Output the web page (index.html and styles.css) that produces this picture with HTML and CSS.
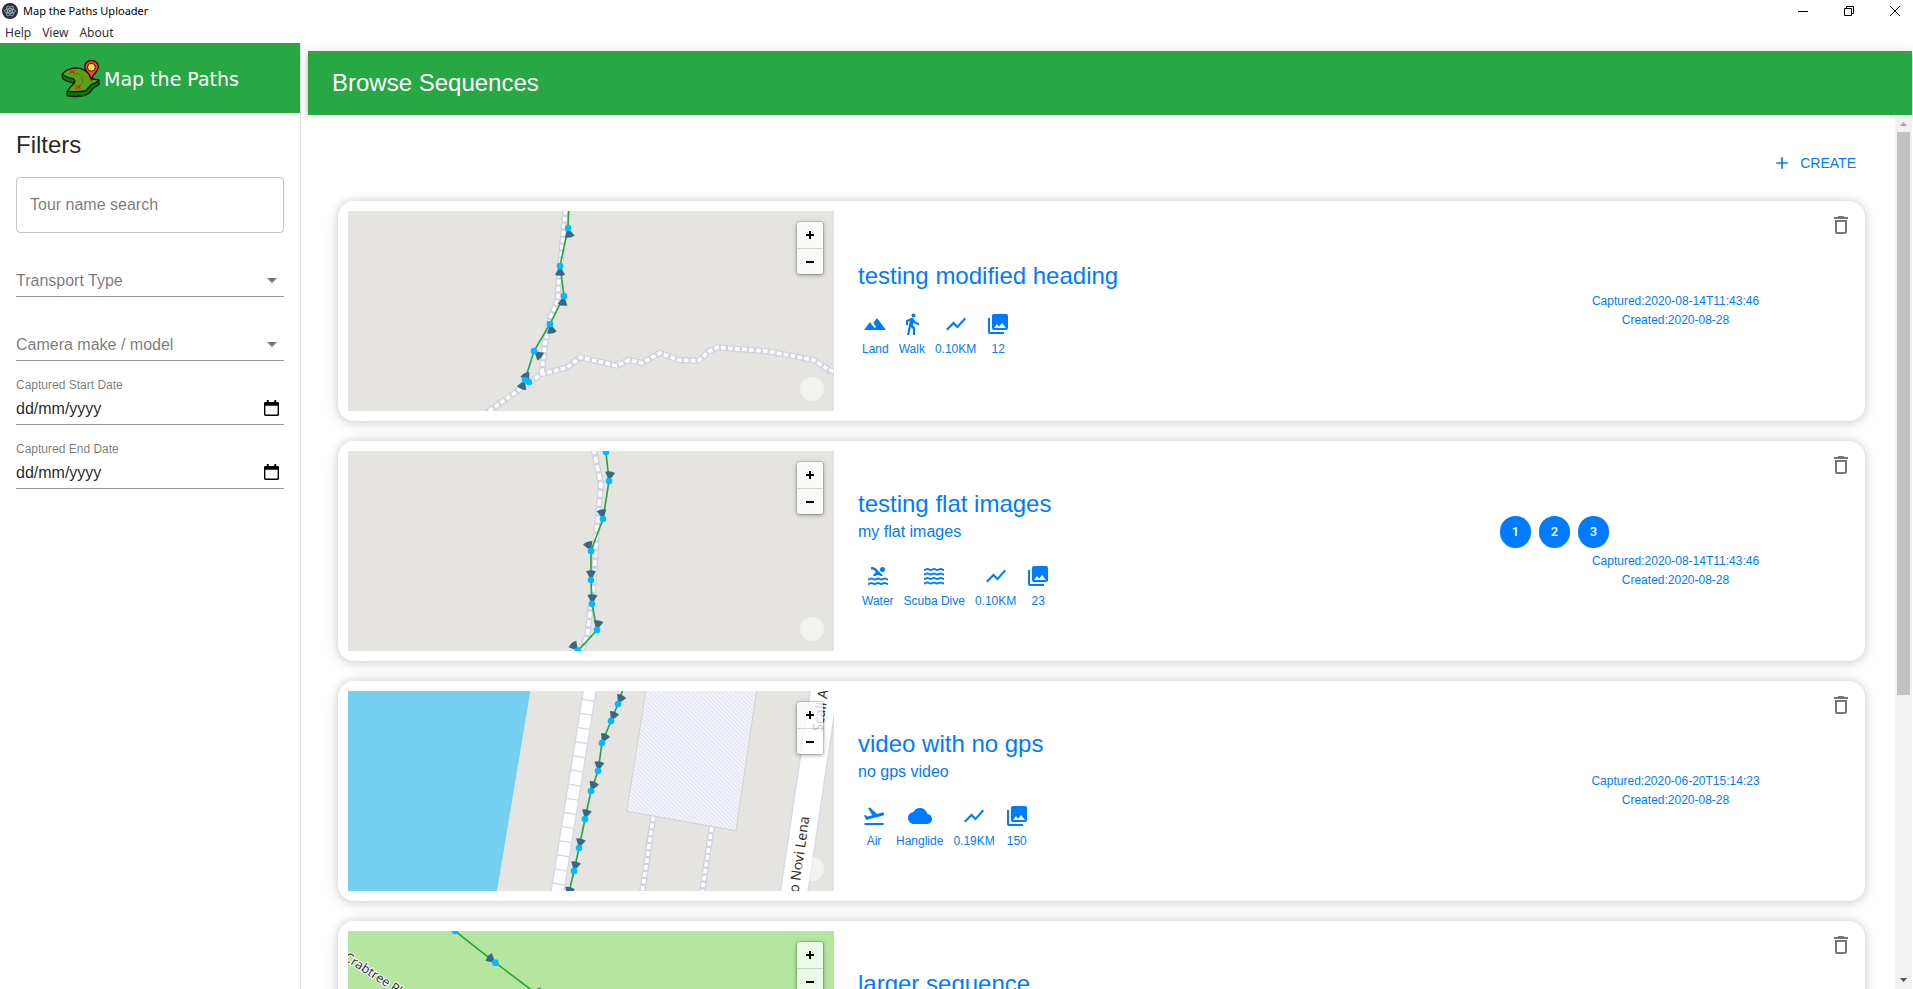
FILE: index.html
```html
<!DOCTYPE html>
<html lang="en-GB">
<head>
<meta charset="utf-8">
<title>Map the Paths Uploader</title>
<link rel="stylesheet" href="styles.css">
</head>
<body>
<svg class="defs" aria-hidden="true">
  <defs>
    <symbol id="i-trash" viewBox="0 0 24 24"><path d="M6 19c0 1.100.9 2 2 2h8c1.100 0 2-.9 2-2V7H6v12zM8 9h8v10H8V9zm7.500-5l-1-1h-5l-1 1H5v2h14V4h-3.500z"/></symbol>
    <symbol id="i-add" viewBox="0 0 24 24"><path d="M19 13h-6v6h-2v-6H5v-2h6V5h2v6h6v2z"/></symbol>
    <symbol id="i-land" viewBox="0 0 24 24"><path d="M14 6l-3.750 5 2.850 3.800-1.600 1.200C9.810 13.750 7 10 7 10l-6 8h22L14 6z"/></symbol>
    <symbol id="i-walk" viewBox="0 0 24 24"><path d="M13.500 5.500c1.100 0 2-.9 2-2s-.9-2-2-2-2 .9-2 2 .9 2 2 2zM9.800 8.900L7 23h2.100l1.800-8 2.100 2v6h2v-7.500l-2.100-2 .6-3C14.800 12 16.800 13 19 13v-2c-1.900 0-3.500-1-4.300-2.400l-1-1.600c-.4-.6-1-1-1.700-1-.3 0-.5.1-.8.1L6 8.300V13h2V9.600l1.800-.7"/></symbol>
    <symbol id="i-chart" viewBox="0 0 24 24"><path d="M3.500 18.490l6-6.010 4 4L22 6.920l-1.410-1.410-7.090 7.970-4-4L2 16.990z"/></symbol>
    <symbol id="i-photos" viewBox="0 0 24 24"><path d="M22 16V4c0-1.100-.9-2-2-2H8c-1.100 0-2 .9-2 2v12c0 1.100.9 2 2 2h12c1.100 0 2-.9 2-2zm-11-4l2.030 2.710L16 11l4 5H8l3-4zM2 6v14c0 1.100.9 2 2 2h14v-2H4V6H2z"/></symbol>
    <symbol id="i-pool" viewBox="0 0 24 24">
      <path d="M8.670 12c.56 0 .78-.13 1.150-.36.46-.27 1.080-.64 2.190-.64 1.110 0 1.730.37 2.180.64.37.22.6.36 1.150.36s.78-.13 1.150-.36c.12-.07.26-.15.41-.23L10.480 5C8.930 3.450 7.500 2.990 5 3v2.500c1.820-.01 2.890.39 4 1.500l1 1-3.250 3.250c.31.12.56.27.77.39.37.23.59.36 1.150.36z"/>
      <circle cx="16.500" cy="5.500" r="2.500"/>
      <g fill="none" stroke="currentColor" stroke-width="2">
        <path d="M2 15.500c1.700 0 1.700-1 3.330-1s1.700 1 3.340 1 1.700-1 3.330-1 1.700 1 3.330 1 1.700-1 3.340-1 1.700 1 3.330 1"/>
        <path d="M2 20c1.700 0 1.700-1 3.330-1s1.700 1 3.340 1 1.700-1 3.330-1 1.700 1 3.330 1 1.700-1 3.340-1 1.700 1 3.330 1"/>
      </g>
    </symbol>
    <symbol id="i-waves" viewBox="0 0 24 24">
      <g fill="none" stroke="currentColor" stroke-width="2">
        <path d="M2 6c1.700 0 1.700-1 3.330-1s1.700 1 3.340 1 1.700-1 3.330-1 1.700 1 3.330 1 1.700-1 3.340-1 1.700 1 3.330 1"/>
        <path d="M2 10.500c1.700 0 1.700-1 3.330-1s1.700 1 3.340 1 1.700-1 3.330-1 1.700 1 3.330 1 1.700-1 3.340-1 1.700 1 3.330 1"/>
        <path d="M2 15c1.700 0 1.700-1 3.330-1s1.700 1 3.340 1 1.700-1 3.330-1 1.700 1 3.330 1 1.700-1 3.340-1 1.700 1 3.330 1"/>
        <path d="M2 19.500c1.700 0 1.700-1 3.330-1s1.700 1 3.340 1 1.700-1 3.330-1 1.700 1 3.330 1 1.700-1 3.340-1 1.700 1 3.330 1"/>
      </g>
    </symbol>
    <symbol id="i-air" viewBox="0 0 24 24"><path d="M2.500 19h19v2h-19zm19.570-9.360c-.21-.8-1.040-1.280-1.840-1.060L14.920 10l-6.900-6.430-1.930.51 4.140 7.170-4.970 1.330-1.970-1.540-1.450.39 1.820 3.160.77 1.330 1.600-.43 5.310-1.420 4.350-1.160L21 11.490c.81-.23 1.280-1.050 1.070-1.850z"/></symbol>
    <symbol id="i-cloud" viewBox="0 0 24 24"><path d="M19.350 10.040C18.670 6.590 15.640 4 12 4 9.110 4 6.600 5.640 5.350 8.040 2.340 8.360 0 10.910 0 14c0 3.310 2.690 6 6 6h13c2.760 0 5-2.240 5-5 0-2.640-2.050-4.780-4.650-4.960z"/></symbol>
    <symbol id="i-calendar" viewBox="0 0 16 18"><path fill-rule="evenodd" d="M1.500 2H3V0h2v2h6V0h2v2h1.500Q16 2 16 3.500v12Q16 17 14.500 17h-13Q0 17 0 15.500v-12Q0 2 1.500 2zM1.500 6v9.500h13V6z"/></symbol>
    <path id="cone" class="cone" d="M0 0L-15-26Q0-33 15-26z"/>
    <pattern id="hatch" width="9" height="9" patternUnits="userSpaceOnUse" patternTransform="rotate(-45)"><rect width="9" height="9" fill="#f7f7fb"/><rect width="4" height="9" fill="#dfe2f0"/></pattern>
  </defs>
</svg>

<div class="window">
  <header class="titlebar">
    <div class="title-row">
      <svg class="app-icon" viewBox="0 0 16 16" aria-hidden="true">
        <circle cx="8" cy="8" r="8" fill="#2b2e3b"/>
        <g fill="none" stroke="#9fc5d0" stroke-width=".8"><ellipse cx="8" cy="8" rx="5.500" ry="2.200"/><ellipse cx="8" cy="8" rx="5.500" ry="2.200" transform="rotate(60 8 8)"/><ellipse cx="8" cy="8" rx="5.500" ry="2.200" transform="rotate(120 8 8)"/></g>
        <circle cx="8" cy="8" r="1" fill="#9fc5d0"/>
      </svg>
      <span class="app-title">Map the Paths Uploader</span>
      <div class="window-buttons">
        <button type="button" aria-label="Minimize"><svg viewBox="0 0 10 10"><path d="M0 5.500h10"/></svg></button>
        <button type="button" aria-label="Restore"><svg viewBox="0 0 10 10"><path d="M.5 2.500h7v7h-7zM2.500 2.500v-2h7v7h-2"/></svg></button>
        <button type="button" aria-label="Close"><svg viewBox="0 0 10 10"><path d="M0 0l10 10M10 0L0 10"/></svg></button>
      </div>
    </div>
    <nav class="menu">
      <button type="button">Help</button>
      <button type="button">View</button>
      <button type="button">About</button>
    </nav>
  </header>

  <div class="app">
    <aside class="sidebar">
      <div class="brand">
        <svg class="brand-icon" viewBox="175 175 118 118" aria-hidden="true">
          <g stroke="#0a1a08" stroke-width="4" stroke-linejoin="round">
            <path fill="#067a0b" d="M179 220L179 232Q190 245 215 247Q213 258 194 273L194 286Q215 291 245 286Q262 280 268 268Q275 261 290 252L289 238Z"/>
            <path fill="#5ca016" d="M179 220Q195 203 222 202Q242 203 258 218L268 236L289 238Q286 247 268 252Q258 260 250 271Q225 276 194 273Q203 258 216 247Q220 236 206 233Q188 230 179 220Z"/>
          </g>
          <path fill="none" stroke="#a52b15" stroke-width="3" stroke-dasharray="4 4" d="M222 218Q244 226 241 242Q239 252 228 257"/>
          <path stroke="#e02020" stroke-width="4" d="M201 209l16 10M217 209l-16 10M219 255l16 10M235 255l-16 10"/>
          <path fill="#f4433a" stroke="#201008" stroke-width="4" d="M267 237Q262 222 252 212Q246 204 247 196Q250 180 267 179Q285 180 288 196Q288 205 282 213Q272 223 267 237Z"/>
          <circle cx="267" cy="200" r="12" fill="#ffe135" stroke="#201008" stroke-width="3"/>
        </svg>
        <span>Map the Paths</span>
      </div>
      <form class="filters">
        <h2>Filters</h2>
        <input class="search" type="text" aria-label="Tour name search" placeholder="Tour name search">
        <div class="selects">
          <select aria-label="Transport Type"><option>Transport Type</option></select>
          <select aria-label="Camera make / model"><option>Camera make / model</option></select>
        </div>
        <div class="field">
          <label for="start">Captured Start Date</label>
          <div class="date"><input id="start" type="text" placeholder="dd/mm/yyyy"><button type="button" aria-label="Pick start date"><svg><use href="#i-calendar"/></svg></button></div>
        </div>
        <div class="field">
          <label for="end">Captured End Date</label>
          <div class="date"><input id="end" type="text" placeholder="dd/mm/yyyy"><button type="button" aria-label="Pick end date"><svg><use href="#i-calendar"/></svg></button></div>
        </div>
      </form>
    </aside>

    <main class="main">
      <div class="page-head"><h1>Browse Sequences</h1></div>
      <div class="scroll">
        <div class="content">
          <button class="create" type="button"><svg><use href="#i-add"/></svg>CREATE</button>

          <article class="card">
            <div class="map">
              <svg class="map-art" viewBox="24 33 1458 600" preserveAspectRatio="xMidYMid slice">
                <path class="path-edge" d="M677 30L655 260L654 300L632 350L615 430L605 522"/>
                <path class="path-edge" d="M430 645L605 522L680 503L722 472L830 497L868 480L905 489L960 459L1015 480L1075 483L1105 455L1132 442L1285 454L1420 480L1467 510L1500 520"/>
                <path class="path-fill" d="M677 30L655 260L654 300L632 350L615 430L605 522"/>
                <path class="path-fill" d="M430 645L605 522L680 503L722 472L830 497L868 480L905 489L960 459L1015 480L1075 483L1105 455L1132 442L1285 454L1420 480L1467 510L1500 520"/>
                <path class="track" d="M686 30L684 84L660 198L672 288L630 372L582 453L555 540L567 546"/>
                <use href="#cone" transform="translate(684 84) rotate(168)"/>
                <use href="#cone" transform="translate(660 198) rotate(180)"/>
                <use href="#cone" transform="translate(672 288) rotate(190)"/>
                <use href="#cone" transform="translate(630 372) rotate(167)"/>
                <use href="#cone" transform="translate(582 453) rotate(130)"/>
                <use href="#cone" transform="translate(567 546) rotate(-28)"/>
                <use href="#cone" transform="translate(555 540) rotate(203)"/>
                <g class="dots"><circle cx="684" cy="84" r="10"/><circle cx="660" cy="198" r="10"/><circle cx="672" cy="288" r="10"/><circle cx="630" cy="372" r="10"/><circle cx="582" cy="453" r="10"/><circle cx="555" cy="540" r="10"/><circle cx="567" cy="546" r="10"/></g>
              </svg>
              <div class="zoom"><button type="button" aria-label="Zoom in"><svg viewBox="0 0 8 8"><path d="M0 4h8M4 0v8"/></svg></button><button type="button" aria-label="Zoom out"><svg viewBox="0 0 8 8"><path d="M0 4h8"/></svg></button></div>
              <button class="info" type="button" aria-label="Map information"></button>
            </div>
            <div class="detail">
              <h3>testing modified heading</h3>
              <ul class="stats">
                <li><svg><use href="#i-land"/></svg>Land</li>
                <li><svg><use href="#i-walk"/></svg>Walk</li>
                <li><svg><use href="#i-chart"/></svg>0.10KM</li>
                <li><svg><use href="#i-photos"/></svg>12</li>
              </ul>
            </div>
            <div class="meta"><p>Captured:2020-08-14T11:43:46</p><p>Created:2020-08-28</p></div>
            <button class="delete" type="button" aria-label="Delete sequence"><svg><use href="#i-trash"/></svg></button>
          </article>

          <article class="card">
            <div class="map">
              <svg class="map-art" viewBox="24 33 1458 600" preserveAspectRatio="xMidYMid slice">
                <path class="path-edge" d="M760 25L783 132L770 270L762 420L742 585L722 640"/>
                <path class="path-fill long" d="M760 25L783 132L770 270L762 420L742 585L722 640"/>
                <path class="track" d="M798 36L807 123L789 237L753 333L753 420L756 492L771 570L714 632"/>
                <use href="#cone" transform="translate(807 123) rotate(8)"/>
                <use href="#cone" transform="translate(789 237) rotate(-10)"/>
                <use href="#cone" transform="translate(753 333) rotate(-22)"/>
                <use href="#cone" transform="translate(753 420)"/>
                <use href="#cone" transform="translate(756 492) rotate(3)"/>
                <use href="#cone" transform="translate(771 570) rotate(10)"/>
                <use href="#cone" transform="translate(714 632) rotate(-40)"/>
                <g class="dots"><circle cx="798" cy="36" r="10"/><circle cx="807" cy="123" r="10"/><circle cx="789" cy="237" r="10"/><circle cx="753" cy="333" r="10"/><circle cx="753" cy="420" r="10"/><circle cx="756" cy="492" r="10"/><circle cx="771" cy="570" r="10"/><circle cx="714" cy="632" r="10"/></g>
              </svg>
              <div class="zoom"><button type="button" aria-label="Zoom in"><svg viewBox="0 0 8 8"><path d="M0 4h8M4 0v8"/></svg></button><button type="button" aria-label="Zoom out"><svg viewBox="0 0 8 8"><path d="M0 4h8"/></svg></button></div>
              <button class="info" type="button" aria-label="Map information"></button>
            </div>
            <div class="detail">
              <h3>testing flat images</h3>
              <p>my flat images</p>
              <ul class="stats">
                <li><svg><use href="#i-pool"/></svg>Water</li>
                <li><svg><use href="#i-waves"/></svg>Scuba Dive</li>
                <li><svg><use href="#i-chart"/></svg>0.10KM</li>
                <li><svg><use href="#i-photos"/></svg>23</li>
              </ul>
            </div>
            <div class="meta">
              <div class="chips"><span>1</span><span>2</span><span>3</span></div>
              <p>Captured:2020-08-14T11:43:46</p><p>Created:2020-08-28</p>
            </div>
            <button class="delete" type="button" aria-label="Delete sequence"><svg><use href="#i-trash"/></svg></button>
          </article>

          <article class="card">
            <div class="map">
              <svg class="map-art" viewBox="24 33 1458 600" preserveAspectRatio="xMidYMid slice">
                <path fill="#75cff0" d="M0 33H571L471 633H0z"/>
                <path class="promenade-edge" d="M751 20L651 645"/>
                <path class="promenade" d="M751 20L651 645"/>
                <path fill="url(#hatch)" stroke="#d3d1ce" stroke-width="3" d="M918 30H1250L1188 452L860 394z"/>
                <path class="path-edge" d="M940 408L905 645M1115 440L1085 645"/>
                <path class="path-fill" d="M940 410L905 645M1115 442L1085 645"/>
                <path class="road-edge" d="M1454 20L1361 645"/>
                <path class="road" d="M1454 20L1361 645"/>
                <text class="street" text-anchor="end" transform="translate(1408 411) rotate(-82)">o Novi Lena</text>
                <text class="street" transform="translate(1447 156) rotate(-82)">Scali A</text>
                <path class="track" d="M848 30L834 72L813 123L786 189L774 273L753 333L735 417L717 504L702 573L684 650"/>
                <use href="#cone" transform="translate(834 72) rotate(25)"/>
                <use href="#cone" transform="translate(813 123) rotate(24)"/>
                <use href="#cone" transform="translate(786 189) rotate(24)"/>
                <use href="#cone" transform="translate(774 273) rotate(9)"/>
                <use href="#cone" transform="translate(753 333) rotate(22)"/>
                <use href="#cone" transform="translate(735 417) rotate(13)"/>
                <use href="#cone" transform="translate(717 504) rotate(13)"/>
                <use href="#cone" transform="translate(702 573) rotate(14)"/>
                <use href="#cone" transform="translate(684 650) rotate(14)"/>
                <g class="dots"><circle cx="834" cy="72" r="10"/><circle cx="813" cy="123" r="10"/><circle cx="786" cy="189" r="10"/><circle cx="774" cy="273" r="10"/><circle cx="753" cy="333" r="10"/><circle cx="735" cy="417" r="10"/><circle cx="717" cy="504" r="10"/><circle cx="702" cy="573" r="10"/></g>
              </svg>
              <div class="zoom"><button type="button" aria-label="Zoom in"><svg viewBox="0 0 8 8"><path d="M0 4h8M4 0v8"/></svg></button><button type="button" aria-label="Zoom out"><svg viewBox="0 0 8 8"><path d="M0 4h8"/></svg></button></div>
              <button class="info" type="button" aria-label="Map information"></button>
            </div>
            <div class="detail">
              <h3>video with no gps</h3>
              <p>no gps video</p>
              <ul class="stats">
                <li><svg><use href="#i-air"/></svg>Air</li>
                <li><svg><use href="#i-cloud"/></svg>Hanglide</li>
                <li><svg><use href="#i-chart"/></svg>0.19KM</li>
                <li><svg><use href="#i-photos"/></svg>150</li>
              </ul>
            </div>
            <div class="meta"><p>Captured:2020-06-20T15:14:23</p><p>Created:2020-08-28</p></div>
            <button class="delete" type="button" aria-label="Delete sequence"><svg><use href="#i-trash"/></svg></button>
          </article>

          <article class="card">
            <div class="map park">
              <svg class="map-art" viewBox="24 33 1458 600" preserveAspectRatio="xMidYMid slice">
                <text class="street halo" transform="translate(10 118) rotate(33)">Crabtree Pl</text>
                <path class="track" d="M345 33L466 128L570 207L700 310"/>
                <use href="#cone" transform="translate(466 128) rotate(-50)"/>
                <use href="#cone" transform="translate(610 230) rotate(-50)"/>
                <g class="dots"><circle cx="345" cy="33" r="10"/><circle cx="466" cy="128" r="10"/></g>
              </svg>
              <div class="zoom"><button type="button" aria-label="Zoom in"><svg viewBox="0 0 8 8"><path d="M0 4h8M4 0v8"/></svg></button><button type="button" aria-label="Zoom out"><svg viewBox="0 0 8 8"><path d="M0 4h8"/></svg></button></div>
            </div>
            <div class="detail top">
              <h3>larger sequence</h3>
            </div>
            <button class="delete" type="button" aria-label="Delete sequence"><svg><use href="#i-trash"/></svg></button>
          </article>
        </div>
        <div class="scrollbar" aria-hidden="true">
          <svg viewBox="0 0 17 17"><path fill="#a3a3a3" d="M5 11l3.500-4 3.500 4z"/></svg>
          <div class="rail"><div class="thumb"></div></div>
          <svg viewBox="0 0 17 17"><path fill="#505050" d="M5 6l3.500 4 3.500-4z"/></svg>
        </div>
      </div>
    </main>
  </div>
</div>
</body>
</html>
```
FILE: styles.css
```css
* { box-sizing: border-box; }
body { margin: 0; font-family: "Liberation Sans", Arial, sans-serif; color: rgba(0, 0, 0, .87); background: #fff; }
h1, h2, h3, p, ul { margin: 0; padding: 0; font-weight: 400; }
button, input, select { font: inherit; color: inherit; background: none; border: 0; padding: 0; margin: 0; border-radius: 0; }
svg { display: block; fill: currentColor; }
.defs { position: absolute; width: 0; height: 0; }

.window { height: 100vh; display: flex; flex-direction: column; overflow: hidden; }

/* native window frame */
.titlebar { font-family: "Noto Sans", "Open Sans", sans-serif; color: #000; }
.title-row { display: flex; align-items: center; height: 22px; padding-left: 2px; gap: 5px; }
.app-icon { width: 16px; height: 16px; }
.app-title { font-size: 11px; line-height: 16px; }
.window-buttons { display: flex; gap: 10px; margin-left: auto; }
.window-buttons button { width: 36px; height: 20px; display: grid; place-items: center; }
.window-buttons svg { width: 10px; height: 10px; fill: none; stroke: #000; stroke-width: 1; overflow: visible; }
.menu { display: flex; gap: 11px; height: 21px; padding: 3px 0 0 5px; }
.menu button { font-size: 12px; line-height: 16px; height: 16px; color: #333; }

.app { flex: 1; min-height: 0; display: flex; }

/* sidebar */
.sidebar { width: 301px; flex: none; border-right: 1px solid #e0e0e0; }
.brand { height: 70px; padding-top: 1px; background: #28a745; color: #fff; display: flex; align-items: center; justify-content: center; gap: 4px; font: 19px/24px "DejaVu Sans", sans-serif; }
.brand-icon { width: 39px; height: 39px; }
.filters { padding: 16px; display: flex; flex-direction: column; gap: 16px; }
.filters h2 { font-size: 24px; line-height: 32px; }
.search { width: 100%; height: 56px; padding: 0 13px; border: 1px solid rgba(0, 0, 0, .23); border-radius: 4px; font-size: 16px; }
.search::placeholder { color: rgba(0, 0, 0, .54); opacity: 1; }
.selects { padding-top: 16px; display: flex; flex-direction: column; gap: 32px; }
.selects select { appearance: none; width: 100%; height: 32px; font-size: 16px; color: rgba(0, 0, 0, .54); border-bottom: 1px solid rgba(0, 0, 0, .42);
  background: url("data:image/svg+xml,%3Csvg xmlns='http://www.w3.org/2000/svg' viewBox='0 0 10 5'%3E%3Cpath d='M0 0h10L5 5z' fill='%23757575'/%3E%3C/svg%3E") right 7px center / 10px 5px no-repeat; }
.field label { display: block; font-size: 12px; line-height: 16px; color: rgba(0, 0, 0, .54); }
.date { display: flex; align-items: center; height: 32px; padding-right: 5px; border-bottom: 1px solid rgba(0, 0, 0, .42); }
.date input { flex: 1; min-width: 0; font-size: 16px; height: 30px; }
.date input::placeholder { color: rgba(0, 0, 0, .87); opacity: 1; }
.date svg { width: 15px; height: 17px; fill: #000; }

/* main column */
.main { flex: 1; min-width: 0; padding: 8px 1px 0 7px; display: flex; flex-direction: column; }
.page-head { height: 64px; flex: none; padding: 0 24px; display: flex; align-items: center; background: #28a745; color: #fff;
  box-shadow: 0 2px 4px -1px rgba(0, 0, 0, .2), 0 4px 5px 0 rgba(0, 0, 0, .14), 0 1px 10px 0 rgba(0, 0, 0, .12); }
.page-head h1 { font-size: 24px; line-height: 32px; }
.scroll { position: relative; flex: 1; min-height: 0; display: flex; background: #fff; overflow: hidden; }
.content { flex: 1; min-width: 0; padding: 30px; display: flex; flex-direction: column; gap: 20px; }
.create { align-self: flex-end; flex: none; height: 36px; padding: 0 9px; display: flex; align-items: center; gap: 8px; font-size: 14px; line-height: 24px; color: #007bff; }
.create svg { width: 20px; height: 20px; }

.card { position: relative; flex: none; display: grid; grid-template-columns: 486fr 614fr 359fr; column-gap: 24px; align-items: center; padding: 10px; border-radius: 16px; background: #fff; color: #007bff;
  box-shadow: 0 0 8px rgba(33, 45, 70, .2), 0 4px 16px rgba(33, 45, 70, .1); }
.map { position: relative; height: 200px; background: #e5e4e0; overflow: hidden; }
.map.park { background: #b5e59e; }
.map-art { width: 100%; height: 100%; fill: none; }
.path-edge { stroke: #d1d2de; stroke-width: 19; stroke-linejoin: round; }
.path-fill { stroke: #fff; stroke-width: 11; stroke-dasharray: 14 7; }
.path-fill.long { stroke-dasharray: 18 8; }
.promenade-edge { stroke: #d5d8e6; stroke-width: 42; }
.promenade { stroke: #fff; stroke-width: 34; stroke-dasharray: 39 4; }
.road-edge { stroke: #d5d8e6; stroke-width: 86; }
.road { stroke: #fff; stroke-width: 78; }
.track { stroke: #28a745; stroke-width: 5; }
.cone { fill: #35698a; }
.dots { fill: #00bcff; }
.street { font: 42px "Noto Sans", sans-serif; fill: #333; }
.street.halo { font-size: 38px; stroke: #fff; stroke-width: 6; paint-order: stroke; stroke-linejoin: round; }
.zoom { position: absolute; top: 11px; right: 11px; width: 26px; border-radius: 2px; background: rgba(255, 255, 255, .76); box-shadow: 0 0 0 1px rgba(0, 0, 0, .1), 0 1px 4px rgba(0, 0, 0, .4); }
.zoom button { display: grid; place-items: center; width: 26px; height: 26px; }
.zoom button + button { border-top: 1px solid rgba(0, 0, 0, .15); }
.zoom svg { width: 8px; height: 8px; stroke: #000; stroke-width: 2; }
.info { position: absolute; right: 10px; bottom: 10px; width: 24px; height: 24px; border-radius: 50%; background: rgba(255, 255, 255, .5); }

.detail h3 { font-size: 24px; line-height: 32px; }
.detail p { font-size: 16px; line-height: 24px; }
.stats { display: flex; gap: 10px; padding: 20px 4px 3px; list-style: none; }
.stats li { display: flex; flex-direction: column; align-items: center; gap: 3px; font-size: 12px; line-height: 20px; }
.stats svg { width: 24px; height: 24px; }
.detail.top { align-self: start; padding-top: 37px; }
.meta { text-align: center; font-size: 12px; line-height: 19px; }
.chips { display: flex; gap: 8px; padding: 4px; }
.chips span { width: 31px; height: 32px; border-radius: 16px; background: #007bff; color: #fff; font: 500 13px/32px Roboto, "Liberation Sans", sans-serif; }
.delete { position: absolute; top: 12px; right: 12px; color: #757575; }
.delete svg { width: 24px; height: 24px; }

.scrollbar { width: 17px; flex: none; display: flex; flex-direction: column; background: #f1f1f1; }
.scrollbar svg { width: 17px; height: 17px; }
.rail { flex: 1; padding: 0 2px; }
.thumb { height: 67%; background: #c1c1c1; }
```
